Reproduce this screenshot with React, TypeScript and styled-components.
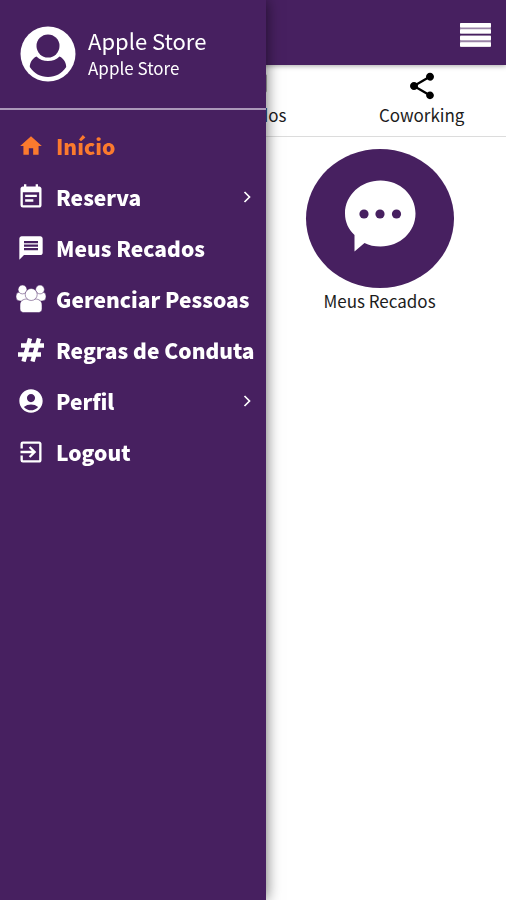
import React from 'react';
import styled, { createGlobalStyle } from 'styled-components';
import { MdAccountCircle, MdEventNote, MdExitToApp, MdHome, MdMessage, MdShare } from 'react-icons/md';

const purple = '#472060';
const orange = '#fb7a2e';

const GlobalStyle = createGlobalStyle`
  *, *::before, *::after { box-sizing: border-box; }
  body {
    margin: 0;
    background: #fff;
    color: #1c1c1c;
    font-family: "Noto Sans CJK SC", "Noto Sans", sans-serif;
  }
  a { color: inherit; text-decoration: none; }
  button { border: 0; padding: 0; background: none; color: inherit; font: inherit; cursor: pointer; }
  svg { display: block; flex: none; }
`;

const Page = styled.div`
  min-height: 100vh;
  display: flex;
  flex-direction: column;
`;

const TopBar = styled.header`
  display: flex;
  align-items: center;
  justify-content: flex-end;
  height: 65px;
  padding: 4px 15px 0;
  background: ${purple};
  color: #fff;
  box-shadow: 0 1px 5px rgba(0, 0, 0, 0.35);
`;

const Tabs = styled.nav`
  display: grid;
  grid-template-columns: repeat(3, 1fr);
  height: 72px;
  border-bottom: 1px solid #dcdcdc;
`;

const Tab = styled.a<{ $column: number }>`
  grid-column: ${({ $column }) => $column};
  display: flex;
  flex-direction: column;
  align-items: center;
  padding-top: 5px;
  font-size: 17px;
  line-height: 26px;
  white-space: nowrap;

  svg { color: #000; }
`;

const Tiles = styled.main`
  display: grid;
  grid-template-columns: repeat(2, 1fr);
  padding-top: 12px;
`;

const Tile = styled.a`
  grid-column: 2;
  display: flex;
  flex-direction: column;
  align-items: center;
  font-size: 17px;
  line-height: 26px;
`;

const TileDisc = styled.span`
  display: flex;
  align-items: center;
  justify-content: center;
  width: 148px;
  height: 139px;
  padding-bottom: 6px;
  border-radius: 50%;
  background: ${purple};
`;

const Drawer = styled.aside`
  position: fixed;
  top: 0;
  bottom: 0;
  left: 0;
  width: 266px;
  max-width: 85vw;
  overflow: hidden auto;
  background: ${purple};
  color: #fff;
  box-shadow: 0 0 14px rgba(0, 0, 0, 0.6);
`;

const Profile = styled.div`
  display: flex;
  align-items: center;
  gap: 12px;
  height: 110px;
  padding: 0 20px;
  border-bottom: 2px solid #ab98b9;
`;

const ProfileText = styled.div`
  display: flex;
  flex-direction: column;
  padding-bottom: 4px;
`;

const ProfileName = styled.span`
  font-size: 22px;
  line-height: 32px;
`;

const ProfileStore = styled.span`
  font-size: 17px;
  line-height: 24px;
`;

const Menu = styled.ul`
  list-style: none;
  margin: 0;
  padding: 10px 0 0;
`;

const MenuLink = styled.a<{ $active?: boolean }>`
  display: flex;
  align-items: center;
  height: 51px;
  padding: 0 12px 0 16px;
  color: ${({ $active }) => ($active ? orange : '#fff')};
  font-size: 21px;
  font-weight: 900;
  line-height: 32px;
  white-space: nowrap;
`;

const IconSlot = styled.span`
  display: flex;
  flex: none;
  justify-content: center;
  width: 30px;
  margin-right: 10px;
`;

const Label = styled.span`
  flex: 1;
`;

const AvatarIcon = () => (
  <svg width="56" height="56" viewBox="0 0 56 56" aria-hidden="true">
    <circle cx="28" cy="28" r="27.5" fill="#fff" />
    <circle cx="28" cy="20" r="11.5" fill={purple} />
    <path d="M16.500 30.500C12 32.500 9.800 37 9.800 41 14 47.500 20.500 51 28 51s14-3.500 18.200-10c0-4-2.200-8.500-6.700-10.500-3 3-7 4.500-11.500 4.500s-8.500-1.500-11.500-4.500z" fill={purple} />
  </svg>
);

const GroupIcon = () => (
  <svg width="30" height="28" viewBox="0 0 30 28" fill="#fff" stroke={purple} strokeWidth="0.5" aria-hidden="true">
    <rect x="0" y="7" width="13" height="9" rx="4" />
    <rect x="17" y="7" width="13" height="9" rx="4" />
    <circle cx="6.5" cy="4.5" r="4.4" />
    <circle cx="24" cy="4.5" r="4.4" />
    <path d="M4 24v-4c0-4 3-6 7-6h8c4 0 7 2 7 6v4c0 2-1.5 3.5-3.5 3.5h-15C5.500 27.500 4 26 4 24z" />
    <circle cx="15.2" cy="9.5" r="6" />
  </svg>
);

const HashIcon = () => (
  <svg width="26" height="24" viewBox="0 0 26 24" fill="none" stroke="#fff" strokeWidth="4.4" aria-hidden="true">
    <path d="M12 0.500 5.500 23.500M21 0.500 14.500 23.500M3 7.500h23M0 16.500h23" />
  </svg>
);

const Chevron = () => (
  <svg width="14" height="14" viewBox="0 0 14 14" fill="none" stroke="#fff" strokeWidth="1.7" aria-hidden="true">
    <path d="m4.500 2 5 5-5 5" />
  </svg>
);

const BarsIcon = () => (
  <svg width="31" height="24" viewBox="0 0 31 24" fill="#fff" aria-hidden="true">
    <rect width="31" height="24" rx="1" opacity="0.45" />
    <rect y="0" width="31" height="4.5" rx="1" />
    <rect y="6.3" width="31" height="4.5" rx="1" />
    <rect y="10.8" width="31" height="1.7" fill={purple} />
    <rect y="12.8" width="31" height="4.5" rx="1" />
    <rect y="19.3" width="31" height="4.5" rx="1" />
  </svg>
);

const BubbleIcon = () => (
  <svg width="72" height="72" viewBox="0 0 72 72" aria-hidden="true">
    <path d="M36.500.5C17 .5 1 15 1 33.500c0 8.500 3.500 16 9.500 21.500V71.500l10-8.500c4.500 2.500 10 3.500 16 3.500 19.500 0 35-14.500 35-33S56 .5 36.500.5z" fill="#fff" />
    <g fill={purple}>
      <circle cx="20" cy="34" r="4.6" />
      <circle cx="36" cy="34" r="4.6" />
      <circle cx="52.5" cy="34" r="4.6" />
    </g>
  </svg>
);

type Item = { label: string; icon: React.ReactNode; active?: boolean; expandable?: boolean };

const items: Item[] = [
  { label: 'Início', icon: <MdHome size={26} />, active: true },
  { label: 'Reserva', icon: <MdEventNote size={28} />, expandable: true },
  { label: 'Meus Recados', icon: <MdMessage size={28} /> },
  { label: 'Gerenciar Pessoas', icon: <GroupIcon /> },
  { label: 'Regras de Conduta', icon: <HashIcon /> },
  { label: 'Perfil', icon: <MdAccountCircle size={28} />, expandable: true },
  { label: 'Logout', icon: <MdExitToApp size={28} /> },
];

export default function App() {
  return (
    <>
      <GlobalStyle />
      <Page>
        <TopBar>
          <button type="button" aria-label="Menu">
            <BarsIcon />
          </button>
        </TopBar>
        <Tabs>
          <Tab href="#recados" $column={2}>
            <MdMessage size={32} />
            Recados
          </Tab>
          <Tab href="#coworking" $column={3}>
            <MdShare size={32} />
            Coworking
          </Tab>
        </Tabs>
        <Tiles>
          <Tile href="#meus-recados">
            <TileDisc>
              <BubbleIcon />
            </TileDisc>
            Meus Recados
          </Tile>
        </Tiles>
      </Page>
      <Drawer>
        <Profile>
          <AvatarIcon />
          <ProfileText>
            <ProfileName>Apple Store</ProfileName>
            <ProfileStore>Apple Store</ProfileStore>
          </ProfileText>
        </Profile>
        <nav>
          <Menu>
            {items.map(({ label, icon, active, expandable }) => (
              <li key={label}>
                <MenuLink href="#" $active={active}>
                  <IconSlot>{icon}</IconSlot>
                  <Label>{label}</Label>
                  {expandable && <Chevron />}
                </MenuLink>
              </li>
            ))}
          </Menu>
        </nav>
      </Drawer>
    </>
  );
}
